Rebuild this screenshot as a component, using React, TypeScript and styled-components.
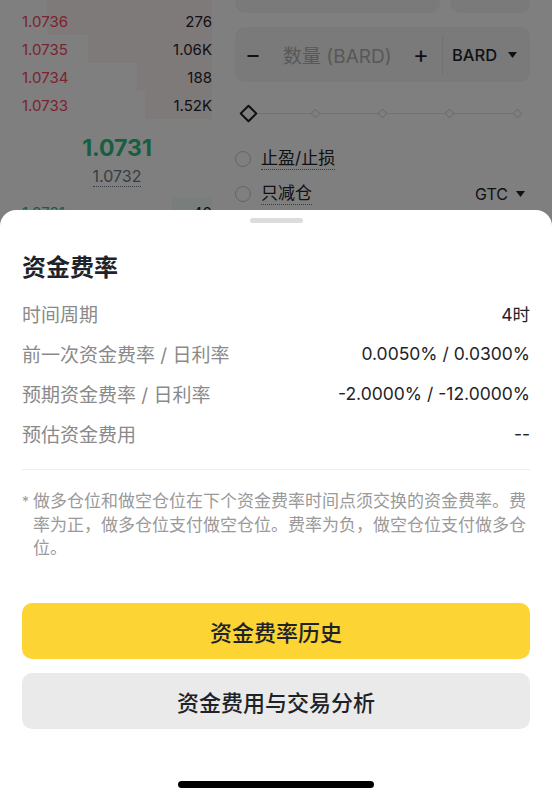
import React from "react";
import styled, { createGlobalStyle } from "styled-components";

const GlobalStyle = createGlobalStyle`
  html, body {
    margin: 0;
    padding: 0;
    background: #fff;
  }
  body {
    font-family: Inter, "Noto Sans CJK SC", sans-serif;
    -webkit-font-smoothing: antialiased;
  }
`;

// Page behind the sheet
const Screen = styled.div`
  position: relative;
  width: 552px;
  height: 800px;
  overflow: hidden;
  background: #fff;
  color: #1e2329;
`;

const Trade = styled.div`
  display: grid;
  grid-template-columns: 190px 1fr;
  column-gap: 23px;
  padding: 0 22px;
  margin-top: -43px;
`;

const Book = styled.div`
  display: flex;
  flex-direction: column;
  padding-top: 22px;
`;

const BookRow = styled.div`
  position: relative;
  display: flex;
  justify-content: space-between;
  align-items: center;
  height: 28px;
  font-size: 15px;
`;

const DepthBar = styled.div<{ $side: "ask" | "bid" }>`
  position: absolute;
  top: 0;
  bottom: 0;
  right: 0;
  background: ${(p) =>
    p.$side === "ask" ? "rgba(246, 70, 93, 0.06)" : "rgba(14, 203, 129, 0.06)"};
`;

const BookPrice = styled.span<{ $side: "ask" | "bid" }>`
  position: relative;
  color: ${(p) => (p.$side === "ask" ? "#f6465d" : "#2ebd85")};
`;

const BookQty = styled.span`
  position: relative;
  color: #1e2329;
`;

const Mid = styled.div`
  display: flex;
  flex-direction: column;
  align-items: center;
  padding: 14px 0 11px;
`;

const LastPrice = styled.div`
  font-size: 23px;
  line-height: 30px;
  font-weight: 700;
  color: #2ebd85;
`;

const MarkPrice = styled.div`
  margin-top: 3px;
  font-size: 16px;
  line-height: 20px;
  color: #707a8a;
  border-bottom: 1px dotted #707a8a;
`;

const OrderForm = styled.div`
  display: flex;
  flex-direction: column;
`;

const PriceRow = styled.div`
  display: flex;
  gap: 10px;
  height: 56px;
`;

const Field = styled.div<{ $width: number }>`
  width: ${(p) => p.$width}px;
  display: flex;
  align-items: center;
  justify-content: center;
  background: #f5f5f5;
  border-radius: 10px;
  font-size: 17px;
  font-weight: 500;
`;

const QtyBox = styled.div`
  margin-top: 14px;
  height: 55px;
  display: flex;
  align-items: center;
  background: #f5f5f5;
  border-radius: 10px;
`;

const Stepper = styled.span<{ $w: number }>`
  width: ${(p) => p.$w}px;
  text-align: center;
  font-size: 24px;
  font-weight: 400;
  color: #1e2329;
`;

const Placeholder = styled.span`
  flex: 1;
  margin-left: 12px;
  font-size: 19px;
  color: #b0b0b0;
`;

const VDivider = styled.span`
  margin-left: 6px;
  width: 1px;
  height: 40px;
  background: #e4e4e4;
`;

const Unit = styled.span`
  width: 87px;
  box-sizing: border-box;
  padding-left: 9px;
  display: flex;
  align-items: center;
  gap: 11px;
  font-size: 16.5px;
  font-weight: 500;
`;

const Caret = () => (
  <svg width="9" height="6" viewBox="0 0 9 6">
    <path d="M0 0h9L4.5 6z" fill="#1e2329" />
  </svg>
);

const Slider = styled.div`
  margin-top: 21px;
  height: 20px;
  display: flex;
  align-items: center;
  justify-content: space-between;
  padding: 0 4px;
  background: linear-gradient(#e3e3e3, #e3e3e3) center / calc(100% - 26px) 1px
    no-repeat;
`;

const Stop = styled.span`
  width: 18px;
  height: 18px;
  display: flex;
  align-items: center;
  justify-content: center;
`;

const Diamond = styled.span<{ $active?: boolean }>`
  box-sizing: border-box;
  width: ${(p) => (p.$active ? 13 : 7)}px;
  height: ${(p) => (p.$active ? 13 : 7)}px;
  transform: rotate(45deg);
  background: #fff;
  border: ${(p) => (p.$active ? "2px solid #1e2329" : "1px solid #dcdcdc")};
  border-radius: 1px;
`;

const Checks = styled.div`
  margin-top: 18px;
  display: flex;
  flex-direction: column;
`;

const CheckRow = styled.div`
  height: 35px;
  display: flex;
  align-items: center;
  gap: 10px;
  padding-right: 5px;
`;

const Circle = styled.span`
  box-sizing: border-box;
  width: 16px;
  height: 16px;
  border-radius: 50%;
  border: 1.5px solid #c8c8c8;
`;

const CheckLabel = styled.span`
  font-size: 17px;
  line-height: 22px;
  border-bottom: 1px dotted #707a8a;
`;

const Tif = styled.span`
  margin-left: auto;
  display: flex;
  align-items: center;
  gap: 8px;
  font-size: 16px;
`;

// Bottom sheet
const Backdrop = styled.div`
  position: absolute;
  inset: 0;
  background: rgba(0, 0, 0, 0.5);
  display: flex;
  flex-direction: column;
  justify-content: flex-end;
`;

const Sheet = styled.div`
  height: 590px;
  box-sizing: border-box;
  padding: 0 22px;
  background: #fff;
  border-radius: 16px 16px 0 0;
  display: flex;
  flex-direction: column;
`;

const Handle = styled.div`
  align-self: center;
  margin-top: 8px;
  width: 53px;
  height: 5px;
  border-radius: 3px;
  background: #dcdcdc;
`;

const Title = styled.h2`
  margin: 29px 0 0;
  font-size: 24px;
  line-height: 32px;
  font-weight: 700;
  color: #1e2329;
`;

const InfoList = styled.div`
  margin-top: 9px;
  display: flex;
  flex-direction: column;
`;

const InfoRow = styled.div`
  height: 40px;
  display: flex;
  align-items: center;
  justify-content: space-between;
`;

const InfoLabel = styled.span`
  font-size: 19px;
  color: #8a8a8a;
`;

const InfoValue = styled.span`
  font-size: 17.5px;
  color: #1e2329;
`;

const Rule = styled.div`
  margin-top: 16px;
  height: 1px;
  background: #efefef;
`;

const Note = styled.div`
  margin-top: 20px;
  display: flex;
  font-size: 17px;
  line-height: 23.5px;
  color: #9a9a9a;
`;

const Star = styled.span`
  width: 11px;
  flex: none;
  font-size: 14px;
`;

const Button = styled.button<{ $primary?: boolean }>`
  height: 56px;
  border: 0;
  border-radius: 10px;
  background: ${(p) => (p.$primary ? "#fcd535" : "#eaeaea")};
  color: #1e2329;
  font-family: inherit;
  font-size: 22px;
  font-weight: 500;
  margin-top: ${(p) => (p.$primary ? 42 : 14)}px;
`;

const HomeBar = styled.div`
  align-self: center;
  margin-top: 52px;
  width: 196px;
  height: 7px;
  border-radius: 4px;
  background: #000;
`;

const asks = [
  { price: "1.0736", qty: "276", bar: 165 },
  { price: "1.0735", qty: "1.06K", bar: 124 },
  { price: "1.0734", qty: "188", bar: 75 },
  { price: "1.0733", qty: "1.52K", bar: 67 },
];

const rates = [
  { label: "时间周期", value: "4时" },
  { label: "前一次资金费率 / 日利率", value: "0.0050% / 0.0300%" },
  { label: "预期资金费率 / 日利率", value: "-2.0000% / -12.0000%" },
  { label: "预估资金费用", value: "--" },
];

const App: React.FC = () => {
  return (
    <Screen>
      <GlobalStyle />
      <Trade>
        <Book>
          {/* row scrolled above the top edge: only its depth bar shows */}
          <BookRow>
            <DepthBar $side="ask" style={{ width: 165 }} />
          </BookRow>
          {asks.map((a) => (
            <BookRow key={a.price}>
              <DepthBar $side="ask" style={{ width: a.bar }} />
              <BookPrice $side="ask">{a.price}</BookPrice>
              <BookQty>{a.qty}</BookQty>
            </BookRow>
          ))}
          <Mid>
            <LastPrice>1.0731</LastPrice>
            <MarkPrice>1.0732</MarkPrice>
          </Mid>
          <BookRow>
            <DepthBar $side="bid" style={{ width: 40 }} />
            <BookPrice $side="bid">1.0731</BookPrice>
            <BookQty>40</BookQty>
          </BookRow>
        </Book>

        <OrderForm>
          <PriceRow>
            <Field $width={205}>1.0323</Field>
            <Field $width={80} />
          </PriceRow>
          <QtyBox>
            <Stepper $w={36}>−</Stepper>
            <Placeholder>数量 (BARD)</Placeholder>
            <Stepper $w={30}>+</Stepper>
            <VDivider />
            <Unit>
              BARD
              <Caret />
            </Unit>
          </QtyBox>
          <Slider>
            <Stop>
              <Diamond $active />
            </Stop>
            <Stop>
              <Diamond />
            </Stop>
            <Stop>
              <Diamond />
            </Stop>
            <Stop>
              <Diamond />
            </Stop>
            <Stop>
              <Diamond />
            </Stop>
          </Slider>
          <Checks>
            <CheckRow>
              <Circle />
              <CheckLabel>止盈/止损</CheckLabel>
            </CheckRow>
            <CheckRow>
              <Circle />
              <CheckLabel>只减仓</CheckLabel>
              <Tif>
                GTC
                <Caret />
              </Tif>
            </CheckRow>
          </Checks>
        </OrderForm>
      </Trade>

      <Backdrop>
        <Sheet>
          <Handle />
          <Title>资金费率</Title>
          <InfoList>
            {rates.map((r) => (
              <InfoRow key={r.label}>
                <InfoLabel>{r.label}</InfoLabel>
                <InfoValue>{r.value}</InfoValue>
              </InfoRow>
            ))}
          </InfoList>
          <Rule />
          <Note>
            <Star>*</Star>
            <span>
              做多仓位和做空仓位在下个资金费率时间点须交换的资金费率。费率为正，做多仓位支付做空仓位。费率为负，做空仓位支付做多仓位。
            </span>
          </Note>
          <Button $primary>资金费率历史</Button>
          <Button>资金费用与交易分析</Button>
          <HomeBar />
        </Sheet>
      </Backdrop>
    </Screen>
  );
};

export default App;
